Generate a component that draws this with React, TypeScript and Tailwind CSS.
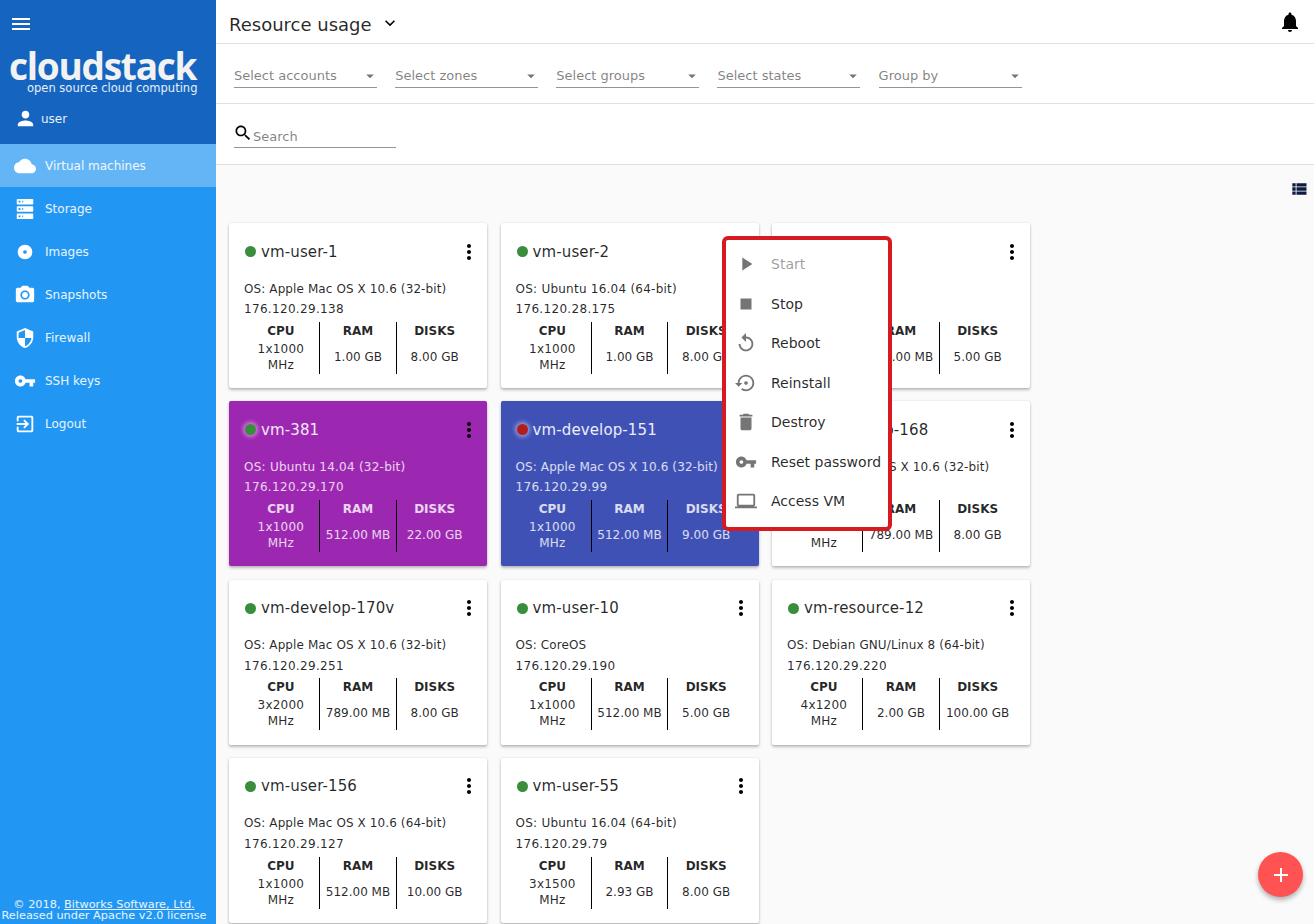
const icons = {
  menu: 'M3 18h18v-2H3v2zm0-5h18v-2H3v2zm0-7v2h18V6H3z',
  person: 'M12 12c2.21 0 4-1.79 4-4s-1.79-4-4-4-4 1.79-4 4 1.79 4 4 4zm0 2c-2.67 0-8 1.34-8 4v2h16v-2c0-2.66-5.33-4-8-4z',
  cloud: 'M19.35 10.04C18.67 6.59 15.64 4 12 4 9.11 4 6.6 5.64 5.35 8.04 2.34 8.36 0 10.91 0 14c0 3.31 2.69 6 6 6h13c2.76 0 5-2.24 5-5 0-2.64-2.05-4.78-4.65-4.96z',
  server: 'M4,1H20A1,1 0 0,1 21,2V6A1,1 0 0,1 20,7H4A1,1 0 0,1 3,6V2A1,1 0 0,1 4,1M4,9H20A1,1 0 0,1 21,10V14A1,1 0 0,1 20,15H4A1,1 0 0,1 3,14V10A1,1 0 0,1 4,9M4,17H20A1,1 0 0,1 21,18V22A1,1 0 0,1 20,23H4A1,1 0 0,1 3,22V18A1,1 0 0,1 4,17M9,5H10V3H9V5M9,13H10V11H9V13M9,21H10V19H9V21M5,3V5H7V3H5M5,11V13H7V11H5M5,19V21H7V19H5Z',
  disc: 'M12,14C10.89,14 10,13.1 10,12C10,10.89 10.89,10 12,10C13.11,10 14,10.89 14,12A2,2 0 0,1 12,14M12,4A8,8 0 0,0 4,12A8,8 0 0,0 12,20A8,8 0 0,0 20,12A8,8 0 0,0 12,4Z',
  camera: 'M9 2L7.17 4H4c-1.1 0-2 .9-2 2v12c0 1.1.9 2 2 2h16c1.1 0 2-.9 2-2V6c0-1.1-.9-2-2-2h-3.17L15 2H9zm3 15c-2.76 0-5-2.24-5-5s2.24-5 5-5 5 2.24 5 5-2.24 5-5 5zm0-8.2a3.2 3.2 0 1 0 0 6.4 3.2 3.2 0 0 0 0-6.4z',
  shield: 'M12 1L3 5v6c0 5.55 3.84 10.74 9 12 5.16-1.26 9-6.45 9-12V5l-9-4zm0 10.99h7c-.53 4.12-3.28 7.79-7 8.94V12H5V6.3l7-3.11v8.8z',
  key: 'M12.65 10C11.83 7.67 9.61 6 7 6c-3.31 0-6 2.69-6 6s2.69 6 6 6c2.61 0 4.83-1.67 5.65-4H17v4h4v-4h2v-4H12.65zM7 14c-1.1 0-2-.9-2-2s.9-2 2-2 2 .9 2 2-.9 2-2 2z',
  exit: 'M10.09 15.59L11.5 17l5-5-5-5-1.41 1.41L12.67 11H3v2h9.67l-2.58 2.59zM19 3H5c-1.11 0-2 .9-2 2v4h2V5h14v14H5v-4H3v4c0 1.1.89 2 2 2h14c1.1 0 2-.9 2-2V5c0-1.1-.9-2-2-2z',
  chevron: 'M7.41 8.59L12 13.17l4.59-4.58L18 10l-6 6-6-6 1.41-1.41z',
  bell: 'M12 22c1.1 0 2-.9 2-2h-4c0 1.1.89 2 2 2zm6-6v-5c0-3.07-1.64-5.64-4.5-6.32V4c0-.83-.67-1.5-1.5-1.5s-1.5.67-1.5 1.5v.68C7.63 5.36 6 7.92 6 11v5l-2 2v1h16v-1l-2-2z',
  search: 'M15.5 14h-.79l-.28-.27C15.41 12.59 16 11.11 16 9.5 16 5.91 13.09 3 9.5 3S3 5.91 3 9.5 5.91 16 9.5 16c1.61 0 3.09-.59 4.23-1.57l.27.28v.79l5 4.99L20.49 19l-4.99-5zm-6 0C7.01 14 5 11.99 5 9.5S7.01 5 9.5 5 14 7.01 14 9.5 11.99 14 9.5 14z',
  list: 'M4 14h4v-4H4v4zm0 5h4v-4H4v4zM4 9h4V5H4v4zm5 5h12v-4H9v4zm0 5h12v-4H9v4zM9 5v4h12V5H9z',
  more: 'M12 8c1.1 0 2-.9 2-2s-.9-2-2-2-2 .9-2 2 .9 2 2 2zm0 2c-1.1 0-2 .9-2 2s.9 2 2 2 2-.9 2-2-.9-2-2-2zm0 6c-1.1 0-2 .9-2 2s.9 2 2 2 2-.9 2-2-.9-2-2-2z',
  play: 'M8 5v14l11-7z',
  stop: 'M6 6h12v12H6z',
  replay: 'M12 5V1L7 6l5 5V7c3.31 0 6 2.69 6 6s-2.69 6-6 6-6-2.69-6-6H4c0 4.42 3.58 8 8 8s8-3.58 8-8-3.58-8-8-8z',
  restore: 'M14 12c0-1.1-.9-2-2-2s-2 .9-2 2 .9 2 2 2 2-.9 2-2zm-2-9c-4.97 0-9 4.03-9 9H0l4 4 4-4H5c0-3.87 3.13-7 7-7s7 3.13 7 7-3.13 7-7 7c-1.51 0-2.91-.49-4.06-1.3l-1.42 1.44C8.04 20.3 9.94 21 12 21c4.97 0 9-4.03 9-9s-4.03-9-9-9z',
  trash: 'M6 19c0 1.1.9 2 2 2h8c1.1 0 2-.9 2-2V7H6v12zM19 4h-3.5l-1-1h-5l-1 1H5v2h14V4z',
  laptop: 'M20 18c1.1 0 1.99-.9 1.99-2L22 6c0-1.1-.9-2-2-2H4c-1.1 0-2 .9-2 2v10c0 1.1.9 2 2 2H0v2h24v-2h-4zM4 6h16v10H4V6z',
  add: 'M19 13h-6v6h-2v-6H5v-2h6V5h2v6h6v2z',
  arrow: 'M7 10l5 5 5-5z',
}

function Icon({ d, className }: { d: string; className?: string }) {
  return (
    <svg viewBox="0 0 24 24" fill="currentColor" className={className}>
      <path d={d} />
    </svg>
  )
}

const navItems = [
  { label: 'Virtual machines', icon: icons.cloud, active: true },
  { label: 'Storage', icon: icons.server },
  { label: 'Images', icon: icons.disc },
  { label: 'Snapshots', icon: icons.camera },
  { label: 'Firewall', icon: icons.shield },
  { label: 'SSH keys', icon: icons.key },
  { label: 'Logout', icon: icons.exit },
]

const filters = ['Select accounts', 'Select zones', 'Select groups', 'Select states', 'Group by']

type Vm = {
  name: string
  os: string
  ip: string
  cpu: string
  ram: string
  disks: string
  tone?: 'purple' | 'blue'
  stopped?: boolean
}

const vms: Vm[] = [
  { name: 'vm-user-1', os: 'Apple Mac OS X 10.6 (32-bit)', ip: '176.120.29.138', cpu: '1x1000', ram: '1.00 GB', disks: '8.00 GB' },
  { name: 'vm-user-2', os: 'Ubuntu 16.04 (64-bit)', ip: '176.120.28.175', cpu: '1x1000', ram: '1.00 GB', disks: '8.00 GB' },
  { name: 'vm-user-3', os: 'CoreOS', ip: '176.120.29.86', cpu: '1x1000', ram: '512.00 MB', disks: '5.00 GB' },
  { name: 'vm-381', os: 'Ubuntu 14.04 (32-bit)', ip: '176.120.29.170', cpu: '1x1000', ram: '512.00 MB', disks: '22.00 GB', tone: 'purple' },
  { name: 'vm-develop-151', os: 'Apple Mac OS X 10.6 (32-bit)', ip: '176.120.29.99', cpu: '1x1000', ram: '512.00 MB', disks: '9.00 GB', tone: 'blue', stopped: true },
  { name: 'vm-develop-168', os: 'Apple Mac OS X 10.6 (32-bit)', ip: '176.120.29.168', cpu: '1x1000', ram: '789.00 MB', disks: '8.00 GB' },
  { name: 'vm-develop-170v', os: 'Apple Mac OS X 10.6 (32-bit)', ip: '176.120.29.251', cpu: '3x2000', ram: '789.00 MB', disks: '8.00 GB' },
  { name: 'vm-user-10', os: 'CoreOS', ip: '176.120.29.190', cpu: '1x1000', ram: '512.00 MB', disks: '5.00 GB' },
  { name: 'vm-resource-12', os: 'Debian GNU/Linux 8 (64-bit)', ip: '176.120.29.220', cpu: '4x1200', ram: '2.00 GB', disks: '100.00 GB' },
  { name: 'vm-user-156', os: 'Apple Mac OS X 10.6 (64-bit)', ip: '176.120.29.127', cpu: '1x1000', ram: '512.00 MB', disks: '10.00 GB' },
  { name: 'vm-user-55', os: 'Ubuntu 16.04 (64-bit)', ip: '176.120.29.79', cpu: '3x1500', ram: '2.93 GB', disks: '8.00 GB' },
]

const menuItems = [
  { label: 'Start', icon: icons.play, disabled: true },
  { label: 'Stop', icon: icons.stop },
  { label: 'Reboot', icon: icons.replay },
  { label: 'Reinstall', icon: icons.restore },
  { label: 'Destroy', icon: icons.trash },
  { label: 'Reset password', icon: icons.key },
  { label: 'Access VM', icon: icons.laptop },
]

function VmCard({ vm }: { vm: Vm }) {
  const cardColor =
    vm.tone === 'purple'
      ? 'bg-[#9c27b0] text-white/80'
      : vm.tone === 'blue'
        ? 'bg-[#3f51b5] text-white/80'
        : 'bg-white text-black/85'
  const titleColor = vm.tone ? 'text-white/90' : 'text-black/85'
  const dotColor = vm.stopped ? 'bg-[#b71c1c]' : 'bg-[#388e3c]'
  const glow = vm.tone ? 'shadow-[0_0_4px_2px_rgba(255,255,255,0.45)]' : ''
  const osTracking = vm.os.startsWith('Ubuntu') ? 'tracking-[0.24px]' : 'tracking-[0.1px]'

  return (
    <div className={`h-[165px] rounded-[2px] shadow-[0_2px_3px_rgba(0,0,0,0.25),0_0_2px_rgba(0,0,0,0.12)] ${cardColor}`}>
      <div className="flex h-[57px] items-center justify-between pl-4 pr-[5.6px]">
        <div className="flex items-center">
          <span className={`h-[11px] w-[11px] rounded-full ${dotColor} ${glow}`} />
          <span className={`ml-[5px] text-[15px] leading-5 tracking-[0.12px] ${titleColor}`}>{vm.name}</span>
        </div>
        <Icon d={icons.more} className="h-6 w-6 text-black" />
      </div>
      <div className="pl-[15px] text-xs leading-5">
        <div className={`mt-[-1.5px] h-[20.6px] ${osTracking}`}>OS: {vm.os}</div>
        <div className="h-[20px] tracking-[0.32px]">{vm.ip}</div>
      </div>
      <div className="mt-[2.7px] grid h-[52px] grid-cols-3 pl-[13.5px] pr-[14.5px] text-center text-xs">
        <div className="flex flex-col items-center">
          <div className="mt-px font-bold leading-[16px]">CPU</div>
          <div className="mt-[2px] leading-[16px] tracking-[0.2px]">
            {vm.cpu}
            <br />
            MHz
          </div>
        </div>
        <div className="flex flex-col items-center border-l border-black">
          <div className="mt-px font-bold leading-[16px]">RAM</div>
          <div className="mt-[10px] whitespace-nowrap leading-[16px]">{vm.ram}</div>
        </div>
        <div className="flex flex-col items-center border-l border-black">
          <div className="mt-px font-bold leading-[16px]">DISKS</div>
          <div className="mt-[10px] whitespace-nowrap leading-[16px]">{vm.disks}</div>
        </div>
      </div>
    </div>
  )
}

export default function App() {
  return (
    <div className="relative flex h-[924px] overflow-hidden bg-[#fafafa] font-['DejaVu_Sans',sans-serif]">
      <aside className="flex w-[216px] shrink-0 flex-col bg-[#2196f3] text-white">
        <div className="h-[144px] bg-[#1565c0] pt-3">
          <Icon d={icons.menu} className="ml-[9px] h-6 w-6" />
          <div className="mt-[14px] ml-[9px] font-['Open_Sans',sans-serif] text-[37px] leading-[32px] font-bold tracking-[-1.25px] text-[#f2f2f2]">
            cloudstack
          </div>
          <div className="mt-[-1px] ml-[27px] text-[11.5px] leading-[14px] whitespace-nowrap text-white/90">
            open source cloud computing
          </div>
          <div className="mt-[12px] ml-[14px] flex items-center">
            <Icon d={icons.person} className="h-[23px] w-[23px]" />
            <span className="ml-[4px] text-xs text-white/90">user</span>
          </div>
        </div>
        <nav className="flex flex-col">
          {navItems.map((item) => (
            <div key={item.label} className={`flex h-[43px] items-center pl-[14px] ${item.active ? 'bg-[#64b5f6]' : ''}`}>
              <Icon d={item.icon} className="h-[22px] w-[22px]" />
              <span className="ml-[9px] text-xs text-white/90">{item.label}</span>
            </div>
          ))}
        </nav>
        <div className="mt-auto pr-[8px] pb-[3px] text-center text-[11.3px] leading-[11px] whitespace-nowrap text-white/90">
          <div>
            © 2018, <span className="underline">Bitworks Software, Ltd.</span>
          </div>
          <div>Released under Apache v2.0 license</div>
        </div>
      </aside>

      <main className="min-w-0 flex-1">
        <header className="flex h-[44px] items-center border-b border-[#e0e0e0] bg-white pl-[13px] pr-[12px]">
          <span className="mt-[6px] text-lg text-black/85">Resource usage</span>
          <Icon d={icons.chevron} className="mt-[3px] ml-[8px] h-5 w-5 text-black" />
          <Icon d={icons.bell} className="ml-auto h-6 w-6 text-black" />
        </header>

        <div className="flex h-[60px] gap-[18.15px] border-b border-[#e0e0e0] bg-white pl-[18px] pt-[17px]">
          {filters.map((filter) => (
            <div key={filter} className="flex h-[27px] w-[143px] items-center justify-between border-b border-[#949494] pt-1 text-[13px] text-black/50">
              <span>{filter}</span>
              <Icon d={icons.arrow} className="mr-[-2px] h-[18px] w-[18px] text-[#757575]" />
            </div>
          ))}
        </div>

        <div className="h-[61px] border-b border-[#e0e0e0] bg-white pl-[18px] pt-[19px]">
          <div className="flex h-[25px] w-[162px] items-center border-b border-[#949494] text-[13px] text-black/50">
            <Icon d={icons.search} className="ml-[-1px] h-5 w-5 self-start text-black" />
            <span className="mt-[4px]">Search</span>
          </div>
        </div>

        <div className="flex h-[58px] justify-end pt-[14px] pr-[5px]">
          <Icon d={icons.list} className="h-5 w-5 text-[#0d1b3e]" />
        </div>

        <div className="grid grid-cols-[258px_258px_258px] gap-x-[13.5px] gap-y-[13.3px] pl-[13px]">
          {vms.map((vm) => (
            <VmCard key={vm.name} vm={vm} />
          ))}
        </div>
      </main>

      <div className="absolute left-[722px] top-[236px] flex h-[295px] w-[170px] flex-col justify-center rounded-[6px] border-[4px] border-[#d71a1f] bg-white pb-[2px]">
        {menuItems.map((item) => (
          <div key={item.label} className="flex h-[39.5px] items-center pl-[8.5px]">
            <Icon d={item.icon} className="h-[22px] w-[22px] text-[#757575]" />
            <span className={`ml-[14.5px] text-sm whitespace-nowrap ${item.disabled ? 'text-black/40' : 'text-black/85'}`}>
              {item.label}
            </span>
          </div>
        ))}
      </div>

      <div className="absolute left-[1258px] top-[852px] flex h-[45px] w-[45px] items-center justify-center rounded-full bg-[#ff5252] shadow-[0_3px_5px_rgba(0,0,0,0.3)]">
        <Icon d={icons.add} className="h-6 w-6 text-white" />
      </div>
    </div>
  )
}
